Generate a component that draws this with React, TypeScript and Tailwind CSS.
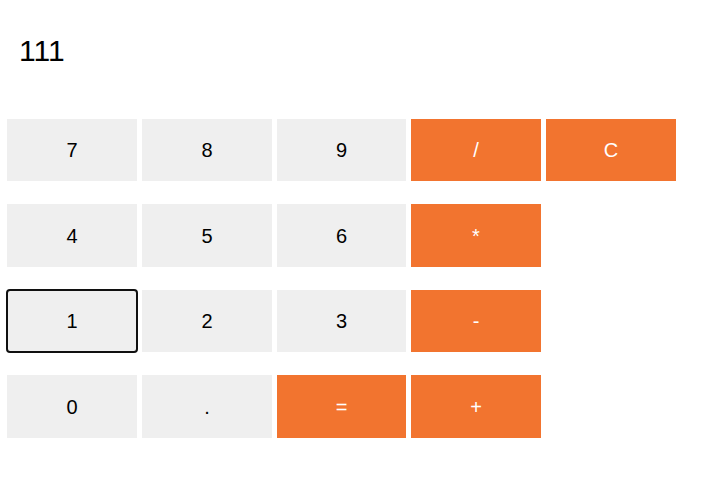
import { useState } from 'react'

type Key = { label: string; op?: boolean; focus?: boolean }

const rows: { h: string; keys: Key[] }[] = [
  {
    h: 'h-[62px]',
    keys: [{ label: '7' }, { label: '8' }, { label: '9' }, { label: '/', op: true }, { label: 'C', op: true }],
  },
  {
    h: 'h-[63px]',
    keys: [{ label: '4' }, { label: '5' }, { label: '6' }, { label: '*', op: true }],
  },
  {
    h: 'h-[62px]',
    keys: [{ label: '1', focus: true }, { label: '2' }, { label: '3' }, { label: '-', op: true }],
  },
  {
    h: 'h-[63px]',
    keys: [{ label: '0' }, { label: '.' }, { label: '=', op: true }, { label: '+', op: true }],
  },
]

export default function App() {
  const [display] = useState('111')

  return (
    <div className="h-[491px] w-[706px] bg-white font-['Liberation_Sans',Arial,sans-serif] text-black">
      <div className="pl-[19px] pt-[34px] text-[30px] leading-[34px]">{display}</div>

      <div className="mt-[51px] flex flex-col gap-[23px] pl-[7px]">
        {rows.map((row, i) => (
          <div key={i} className={`grid grid-cols-[130px_130px_129px_130px_130px] gap-x-[5px] ${row.h}`}>
            {row.keys.map(k => (
              <button
                key={k.label}
                className={
                  k.op
                    ? 'flex items-center justify-center bg-[#f2742f] text-[20px] text-white'
                    : k.focus
                      ? 'flex items-center justify-center rounded-[3px] bg-[#efefef] text-[20px] text-black outline-2 outline-solid outline-[#101010] -outline-offset-1'
                      : 'flex items-center justify-center bg-[#efefef] text-[20px] text-black'
                }
              >
                {k.label}
              </button>
            ))}
          </div>
        ))}
      </div>
    </div>
  )
}
